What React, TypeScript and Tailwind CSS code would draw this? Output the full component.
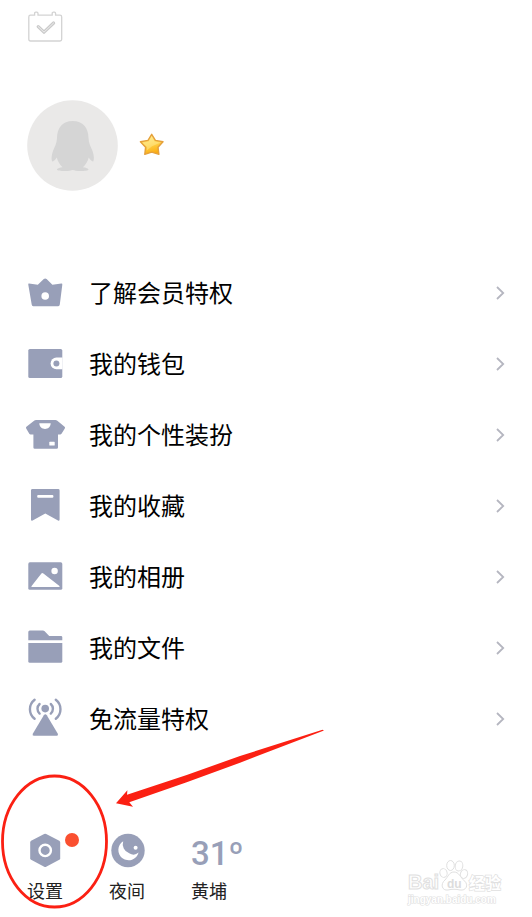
import type { ReactNode } from "react";

const rows: { label: string; icon: ReactNode }[] = [
  {
    label: "了解会员特权",
    icon: (
      <>
        <path
          d="M4 10.6 12.8 11.8 18.8 5.9Q20.2 5 21.6 5.9L27.4 11.8 36.4 10.6Q37.5 10.5 37.3 11.8L34.8 31.6Q34.6 33.2 33.2 33.2H8.2Q6.9 33.2 6.7 31.6L3.3 11.8Q3 10.5 4 10.6Z"
          fill="#989fb8"
        />
        <circle cx="20.2" cy="23" r="3.8" fill="#fff" />
      </>
    ),
  },
  {
    label: "我的钱包",
    icon: (
      <>
        <rect x="3.3" y="5" width="34" height="29" rx="1.6" fill="#989fb8" />
        <path d="M37.5 13.6H31.4A5.8 5.8 0 0 0 31.4 25.2H37.5Z" fill="#fff" />
        <circle cx="31.4" cy="19.4" r="3" fill="#989fb8" />
      </>
    ),
  },
  {
    label: "我的个性装扮",
    icon: (
      <>
        <path
          d="M11 5H30.4Q31.4 5 32 5.5L39.6 11.8Q40.4 12.5 39.8 13.4L36.5 18.8Q36 19.5 35.2 19.5H33V32.4Q33 33.8 31.6 33.8H9.8Q8.4 33.8 8.4 32.4V19.5H5.6Q4.8 19.5 4.3 18.8L1.2 13.4Q.7 12.5 1.4 11.8L9.4 5.5Q10 5 11 5Z"
          fill="#989fb8"
        />
        <path d="M14.3 8.2H25.7C25.5 15.8 14.5 15.8 14.3 8.2Z" fill="#fff" />
        <rect x="24.3" y="26.8" width="5.4" height="3.8" rx=".6" fill="#fff" />
      </>
    ),
  },
  {
    label: "我的收藏",
    icon: (
      <>
        <path
          d="M7.4 3H33.2Q34.6 3 34.6 4.4V33.6Q34.6 35.4 33 34.4L20.3 27.4 7.6 34.4Q6 35.4 6 33.6V4.4Q6 3 7.4 3Z"
          fill="#989fb8"
        />
        <rect x="12.2" y="9" width="16.2" height="2.8" rx="1" fill="#fff" />
      </>
    ),
  },
  {
    label: "我的相册",
    icon: (
      <>
        <rect x="3.3" y="5.3" width="34" height="27.5" rx="1.6" fill="#989fb8" />
        <circle cx="29.6" cy="14" r="3.2" fill="#fff" />
        <path d="M6.4 29.2 16.4 16.6Q17.3 15.6 18.4 16.6L34.8 29.2Q34.6 30 33.8 30H7Q6 30 6.4 29.2Z" fill="#fff" />
      </>
    ),
  },
  {
    label: "我的文件",
    icon: (
      <>
        <path d="M4.8 2.4H18Q18.8 2.4 19.4 3L24.2 8H36Q37.3 8 37.3 9.3V12.3H3.3V3.9Q3.3 2.4 4.8 2.4Z" fill="#989fb8" />
        <path d="M3.3 15H37.3V33.2Q37.3 34.7 35.8 34.7H4.8Q3.3 34.7 3.3 33.2Z" fill="#989fb8" />
      </>
    ),
  },
  {
    label: "免流量特权",
    icon: (
      <>
        <circle cx="20.2" cy="9.6" r="3.8" fill="#989fb8" />
        <path
          d="M18.8 16.2Q20.3 14.2 21.8 16.2L32.8 34.8Q33.6 36.7 31.8 36.8H8.8Q7 36.7 7.8 34.8Z"
          fill="#989fb8"
        />
        <path
          d="M14.6 5A6.5 6.5 0 0 0 14.6 14.6M25.8 5A6.5 6.5 0 0 1 25.8 14.6M9.6 .8A12 12 0 0 0 9.6 19.8M30.8 .8A12 12 0 0 1 30.8 19.8"
          fill="none"
          stroke="#989fb8"
          strokeWidth="2.4"
          strokeLinecap="round"
        />
      </>
    ),
  },
];

function MenuRow({ label, icon }: { label: string; icon: ReactNode }) {
  return (
    <li>
      <a href="#" className="flex h-[71px] items-center pl-[25px] pr-[26px]">
        <svg className="size-[41px] shrink-0 overflow-visible" viewBox="0 0 41 41" aria-hidden="true">
          {icon}
        </svg>
        <span className="ml-[23px] flex-1 pb-1 text-2xl text-black">{label}</span>
        <svg className="h-4 w-[11px]" viewBox="0 0 11 16" fill="none" stroke="#b5b6c0" strokeWidth="1.8" aria-hidden="true">
          <path d="M2 1 8.2 7 2 13" />
        </svg>
      </a>
    </li>
  );
}

function Watermark() {
  return (
    <svg
      className="pointer-events-none absolute bottom-3 right-6 h-[50px] w-[100px] overflow-visible"
      viewBox="0 0 100 50"
      fill="#fff"
      stroke="#e0e0e0"
      aria-hidden="true"
    >
      <g fontFamily="'Liberation Sans', 'Noto Sans CJK SC', sans-serif" fontWeight="700">
        <text x="0" y="33" fontSize="20">Bai</text>
        <ellipse cx="35.5" cy="17" rx="3.6" ry="4.4" transform="rotate(-14 35.5 17)" />
        <ellipse cx="42.5" cy="9.5" rx="3.8" ry="5" />
        <ellipse cx="51" cy="10" rx="3.8" ry="5" transform="rotate(10 51 10)" />
        <ellipse cx="56" cy="18" rx="3.6" ry="4.4" transform="rotate(18 56 18)" />
        <path d="M46 16C41 16 40 21 37 24C32 28 34 35 40 34C44 33 48 33 52 34C58 35 61 29 56.5 25C52 21 51 16 46 16Z" />
        <text x="39" y="32" fontSize="12" fill="#dcdcdc" stroke="none">du</text>
        <text x="61" y="33" fontSize="16" strokeWidth="1.4" paintOrder="stroke">经验</text>
        <text x="0" y="47" fontSize="10" strokeWidth="1.2" paintOrder="stroke">jingyan.baidu.com</text>
      </g>
    </svg>
  );
}

export default function App() {
  return (
    <div className="relative min-h-screen bg-white font-['Noto_Sans_CJK_SC',sans-serif]">
      <header className="pl-[27px]">
        <button type="button" aria-label="打卡" className="block pt-[10px]">
          <svg className="h-8 w-9" viewBox="0 0 36 32" fill="none" stroke="#d3d3d3" strokeWidth="1.3">
            <path d="M3.5 5.2H7.6V3.4Q7.6 2.2 8.8 2.2H9.8Q11 2.2 11 3.4V5.2H25.2V3.4Q25.2 2.2 26.4 2.2H27.4Q28.6 2.2 28.6 3.4V5.2H33Q34.7 5.2 34.7 7V29.2Q34.7 31 33 31H3.5Q1.8 31 1.8 29.2V7Q1.8 5.2 3.5 5.2Z" />
            <path d="M11.2 16.6 17 22.2 26.6 13" stroke="#cacaca" strokeWidth="3.2" strokeLinecap="round" strokeLinejoin="round" />
            <path d="M11.2 16.6 17 22.2 26.6 13" stroke="#efefef" strokeWidth="1" strokeLinecap="round" />
          </svg>
        </button>

        {/* Avatar and level */}
        <div className="flex items-center gap-5 pt-[58px]">
          <svg className="size-[91px]" viewBox="0 0 91 91" aria-hidden="true">
            <circle cx="45.5" cy="45.5" r="45.3" fill="#eae9e8" />
            <path
              d="M45.7 21C35.5 21 30 28 30 38C30 43 27.5 47 26 51C24.4 55.5 24.2 60 25.3 61.5C26.4 62 28.3 59.6 29.8 57.6C30.6 61.5 32.8 64.8 35.6 67.2C32.5 67.6 30 68.4 30 69.5C30 70.8 34 71 38 71C42 71 44 70.5 45.7 70C47.5 70.5 49.5 71 53.5 71C57.5 71 61.5 70.8 61.5 69.5C61.5 68.4 59 67.6 55.9 67.2C58.7 64.8 60.9 61.5 61.7 57.6C63.2 59.6 65.1 62 66.2 61.5C67.3 60 67.1 55.5 65.5 51C64 47 61.5 43 61.5 38C61.5 28 56 21 45.7 21Z"
              fill="#d5d5d5"
            />
          </svg>
          <svg className="size-7" viewBox="0 0 28 28" aria-hidden="true">
            <defs>
              <linearGradient id="gold" x1="0.3" y1="0" x2="0.6" y2="1">
                <stop offset="0" stopColor="#ffe98a" />
                <stop offset="0.5" stopColor="#ffd248" />
                <stop offset="1" stopColor="#faa80c" />
              </linearGradient>
            </defs>
            <path
              d="M13.7 2.3 17.4 8.4 25 9.8 20 15.2 20.9 22.3 13.7 20.2 6.8 22.3 7.6 15.2 2.4 9.8 10 8.4Z"
              fill="url(#gold)"
              stroke="#e5a13c"
              strokeWidth="1.4"
              strokeLinejoin="round"
            />
            <path d="M13.6 4.2 16.6 9.4 22.8 10.6 14 14.2 8.8 18.5 8.9 15 4.6 10.7 10.8 9.4Z" fill="#fff3b0" opacity=".4" />
          </svg>
        </div>
      </header>

      <nav className="pt-[67px]">
        <ul>
          {rows.map((row) => (
            <MenuRow key={row.label} label={row.label} icon={row.icon} />
          ))}
        </ul>
      </nav>

      <footer className="flex items-start gap-[46px] pb-4 pl-[27px] pt-[77px] text-lg leading-6 text-[#222]">
        <button type="button" className="relative flex w-9 flex-col gap-[10px] whitespace-nowrap">
          <svg className="size-9" viewBox="0 0 36 36" aria-hidden="true">
            <path
              d="M17.2 2Q18.2 1.5 19.2 2L32.3 8.8Q33.2 9.3 33.2 10.4V26.2Q33.2 27.3 32.3 27.8L19.2 34.7Q18.2 35.2 17.2 34.7L4.1 27.8Q3.2 27.3 3.2 26.2V10.4Q3.2 9.3 4.1 8.8Z"
              fill="#989fb8"
            />
            <circle cx="18.2" cy="18.4" r="5.7" fill="none" stroke="#fff" strokeWidth="2.4" />
          </svg>
          <span className="absolute -right-4 top-[1px] size-[14px] rounded-full bg-[#fa5030]" />
          <span>设置</span>
        </button>
        <button type="button" className="flex w-9 flex-col gap-[10px] whitespace-nowrap">
          <svg className="size-9 overflow-visible" viewBox="0 0 36 36" aria-hidden="true">
            <circle cx="19" cy="18.5" r="16.7" fill="#989fb8" />
            <path d="M14.2 9.2A10.3 10.3 0 1 0 29.6 20.6A7.8 7.8 0 0 1 20.2 21.2A9.6 9.6 0 0 1 14.2 9.2Z" fill="#fff" />
            <circle cx="26.6" cy="15.7" r="2" fill="#fff" />
          </svg>
          <span>夜间</span>
        </button>
        <button type="button" className="flex flex-col items-start gap-[10px] whitespace-nowrap">
          <span className="h-9 pt-1 text-[33px] font-medium leading-9 text-[#989fb8] [font-family:Roboto,sans-serif]">
            31º
          </span>
          <span>黄埔</span>
        </button>
      </footer>

      <Watermark />

      {/* Red markup over the settings button */}
      <svg
        className="pointer-events-none absolute left-0 top-[725px] h-[190px] w-[330px]"
        viewBox="0 0 330 190"
        aria-hidden="true"
      >
        <ellipse cx="54.5" cy="116.5" rx="52" ry="65.5" fill="none" stroke="#fb2013" strokeWidth="2.8" />
        <path
          d="M116 78.3 127.4 65.2 127 69.7 186.7 50 240 31 322.5 4.8 324 5.6 240 37.7 186.7 57.3 129.3 77.3 133 81.8Z"
          fill="#fb2013"
        />
      </svg>
    </div>
  );
}
